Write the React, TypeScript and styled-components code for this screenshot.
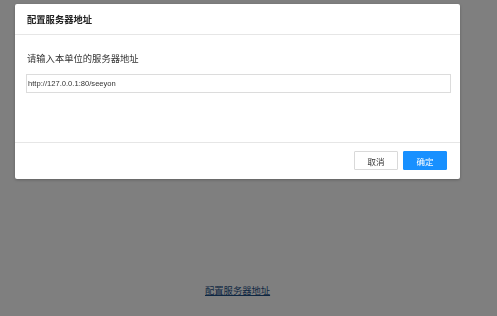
import React, { useState } from "react";
import styled, { createGlobalStyle } from "styled-components";

const GlobalStyle = createGlobalStyle`
  html, body {
    margin: 0;
    padding: 0;
    background: #ffffff;
    font-family: "Liberation Sans", Arial, "Noto Sans CJK SC", sans-serif;
  }
`;

const Page = styled.div`
  position: relative;
  width: 497px;
  height: 316px;
  overflow: hidden;
`;

const LinkRow = styled.div`
  padding: 284px 0 0 205px;
  font-size: 9.3px;
  line-height: 14px;
`;

const ServerLink = styled.a`
  color: #1d4f86;
  text-decoration: underline;
  cursor: pointer;
`;

const Mask = styled.div`
  position: fixed;
  inset: 0;
  background: rgba(0, 0, 0, 0.5);
`;

const Modal = styled.div`
  position: absolute;
  top: 4px;
  left: 15px;
  width: 445px;
  background: #ffffff;
  border-radius: 2px;
  box-shadow: 0 1px 3px rgba(0, 0, 0, 0.25);
  display: flex;
  flex-direction: column;
`;

const Header = styled.div`
  height: 30px;
  display: flex;
  align-items: center;
  padding: 0 12px;
  border-bottom: 1px solid #e6e6e6;
`;

const Title = styled.span`
  font-size: 9.3px;
  font-weight: bold;
  color: #222;
`;

const Body = styled.div`
  height: 107px;
  padding: 18px 9px 0 11px;
  box-sizing: border-box;
  display: flex;
  flex-direction: column;
`;

const Label = styled.div`
  font-size: 9.3px;
  line-height: 12px;
  color: #333;
  padding-left: 1px;
  margin-bottom: 9px;
`;

const Input = styled.input`
  height: 19px;
  box-sizing: border-box;
  border: 1px solid #dcdcdc;
  padding: 0 1px;
  font-family: "Liberation Sans", Arial, sans-serif;
  font-size: 7.6px;
  color: #333;
  outline: none;
`;

const Footer = styled.div`
  border-top: 1px solid #e6e6e6;
  display: flex;
  justify-content: flex-end;
  gap: 5px;
  padding: 8px 13px 9px;
`;

const Button = styled.button<{ $primary?: boolean }>`
  width: 44px;
  height: 19px;
  padding: 0;
  font-family: "Liberation Sans", Arial, "Noto Sans CJK SC", sans-serif;
  font-size: 8.5px;
  cursor: pointer;
  border-radius: 1px;
  border: 1px solid ${(p) => (p.$primary ? "#1890ff" : "#d9d9d9")};
  background: ${(p) => (p.$primary ? "#1890ff" : "#ffffff")};
  color: ${(p) => (p.$primary ? "#ffffff" : "#333")};
`;

const App = () => {
  const [url, setUrl] = useState("http://127.0.0.1:80/seeyon");

  return (
    <Page>
      <GlobalStyle />
      <LinkRow>
        <ServerLink>配置服务器地址</ServerLink>
      </LinkRow>
      <Mask />
      <Modal>
        <Header>
          <Title>配置服务器地址</Title>
        </Header>
        <Body>
          <Label>请输入本单位的服务器地址</Label>
          <Input value={url} onChange={(e) => setUrl(e.target.value)} />
        </Body>
        <Footer>
          <Button>取消</Button>
          <Button $primary>确定</Button>
        </Footer>
      </Modal>
    </Page>
  );
};

export default App;
